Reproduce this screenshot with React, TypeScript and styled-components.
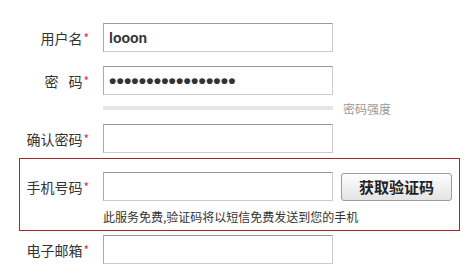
import styled, { createGlobalStyle } from "styled-components";

const GlobalStyle = createGlobalStyle`
  body {
    margin: 0;
    background: #fff;
    font-family: "Noto Sans CJK SC", "Liberation Sans", sans-serif;
    color: #333;
  }
`;

const Form = styled.div`
  width: 441px;
  margin-left: 19px;
  padding-top: 23px;
`;

const Row = styled.div<{ gap?: number }>`
  display: flex;
  align-items: center;
  padding: 0 1px;
  margin-top: ${(p) => p.gap ?? 0}px;
`;

const Label = styled.label`
  width: 69px;
  margin-right: 14px;
  text-align: right;
  font-size: 14px;
  line-height: 16px;
  color: #333;
  white-space: nowrap;
`;

const Star = styled.span`
  color: #d0314a;
  font-size: 12px;
  vertical-align: top;
  margin-left: 1px;
`;

const Wide = styled.span`
  margin-right: 10px;
`;

const Input = styled.input<{ secret?: boolean }>`
  box-sizing: border-box;
  width: 230px;
  height: 29px;
  padding: 0 5px;
  border: 1px solid #ccc;
  border-top-color: #999;
  border-left-color: #aaa;
  font-family: "Liberation Sans", Arial, sans-serif;
  font-size: ${(p) => (p.secret ? 21 : 14)}px;
  letter-spacing: ${(p) => (p.secret ? "0.1px" : "normal")};
  font-weight: bold;
  color: #333;
  outline: none;
  background: #fff;
`;

const Strength = styled.div`
  display: flex;
  align-items: center;
  margin: 11px 0 0 84px;
  height: 4px;
`;

const StrengthBar = styled.div`
  width: 230px;
  height: 4px;
  background: #e5e5e5;
`;

const StrengthText = styled.span`
  margin-left: 10px;
  font-size: 12px;
  color: #999;
  white-space: nowrap;
`;

const PhoneBox = styled.div`
  margin-top: 5px;
  border: 1px solid #a8262b;
  padding: 13px 0 6px;
`;

const PhoneRow = styled.div`
  display: flex;
  align-items: center;
`;

const CodeButton = styled.button`
  margin-left: 8px;
  width: 111px;
  height: 28px;
  border: 1px solid #9a9a9a;
  border-radius: 3px;
  background: linear-gradient(#fdfdfd, #e4e4e4);
  font-family: "Noto Sans CJK SC", sans-serif;
  font-size: 15px;
  font-weight: bold;
  color: #222;
  padding: 0;
`;

const Hint = styled.div`
  margin: 9px 0 0 83px;
  font-size: 12px;
  line-height: 14px;
  color: #333;
  white-space: nowrap;
`;

export default function App() {
  return (
    <>
      <GlobalStyle />
      <Form>
        <Row>
          <Label>
            用户名<Star>*</Star>
          </Label>
          <Input defaultValue="looon" />
        </Row>
        <Row gap={14}>
          <Label>
            <Wide>密</Wide>码<Star>*</Star>
          </Label>
          <Input secret type="password" defaultValue="aaaaaaaaaaaaaaaaa" />
        </Row>
        <Strength>
          <StrengthBar />
          <StrengthText>密码强度</StrengthText>
        </Strength>
        <Row gap={14}>
          <Label>
            确认密码<Star>*</Star>
          </Label>
          <Input secret type="password" />
        </Row>
        <PhoneBox>
          <PhoneRow>
            <Label>
              手机号码<Star>*</Star>
            </Label>
            <Input />
            <CodeButton>获取验证码</CodeButton>
          </PhoneRow>
          <Hint>此服务免费,验证码将以短信免费发送到您的手机</Hint>
        </PhoneBox>
        <Row gap={4}>
          <Label>
            电子邮箱<Star>*</Star>
          </Label>
          <Input />
        </Row>
      </Form>
    </>
  );
}
